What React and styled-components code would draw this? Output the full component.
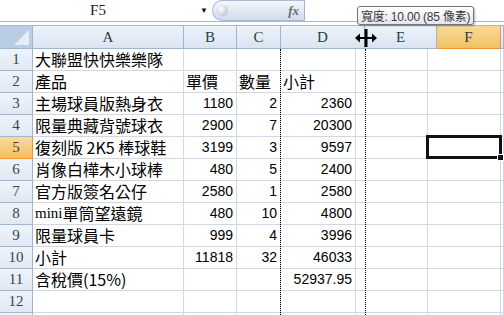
import React from 'react';
import styled, { createGlobalStyle } from 'styled-components';

const GlobalStyle = createGlobalStyle`
    html, body {
        margin: 0;
        padding: 0;
        background: #ffffff;
        overflow: hidden;
    }
    #root {
        width: 504px;
        height: 315px;
    }
`;

const Window = styled.div`
    position: relative;
    width: 504px;
    height: 315px;
    overflow: hidden;
    background: #ffffff;
    font-family: "Liberation Sans", "Noto Sans CJK TC", sans-serif;
`;

const FormulaBar = styled.div`
    display: flex;
    height: 22px;
    border-bottom: 1px solid #a5b9d3;
    box-sizing: border-box;
`;

const NameBox = styled.div`
    width: 196px;
    display: flex;
    align-items: center;
    justify-content: center;
    font-family: "Liberation Serif", serif;
    font-size: 15px;
    color: #222;
`;

const DropArrow = styled.div`
    width: 16px;
    display: flex;
    align-items: center;
    justify-content: center;
    font-size: 8px;
    color: #111;
`;

const Pill = styled.div`
    width: 93px;
    height: 21px;
    box-sizing: border-box;
    border: 1px solid #a9bcd4;
    border-right: 1px solid #9fb3cc;
    border-radius: 10px 0 0 10px;
    background: linear-gradient(#f4f8fc, #cfdbea);
    display: flex;
    align-items: center;
    justify-content: space-between;
    padding: 0 5px 0 4px;
`;

const Knob = styled.div`
    width: 11px;
    height: 11px;
    border-radius: 50%;
    background: radial-gradient(circle at 35% 35%, #ffffff, #aeb8c4);
`;

const Fx = styled.span`
    font-family: "Liberation Serif", serif;
    font-style: italic;
    font-weight: bold;
    font-size: 13px;
    color: #6a6a6a;
`;

const Spacer = styled.div`
    height: 4px;
    border-bottom: 1px solid #a5b9d3;
    box-sizing: border-box;
`;

const HeaderRow = styled.div`
    display: flex;
    height: 23px;
`;

const HeaderCell = styled.div`
    box-sizing: border-box;
    width: ${p => p.w}px;
    flex: ${p => (p.w ? 'none' : '1')};
    display: flex;
    align-items: center;
    justify-content: center;
    border-right: 1px solid ${p => (p.sel ? '#f29436' : '#9eb6ce')};
    border-bottom: 1px solid ${p => (p.sel ? '#f29436' : '#9eb6ce')};
    background: ${p => (p.sel
        ? 'linear-gradient(#f9d99f, #f1c15f)'
        : 'linear-gradient(#eef3fa, #dae4f1)')};
    font-family: "Liberation Serif", serif;
    font-size: 15px;
    color: #27413e;
`;

const Corner = styled.div`
    position: relative;
    width: 33px;
    height: 23px;
    box-sizing: border-box;
    border-right: 1px solid #9eb6ce;
    border-bottom: 1px solid #9eb6ce;
    background: #b9cde5;
`;

const CornerTri = styled.div`
    position: absolute;
    right: 3px;
    bottom: 3px;
    width: 0;
    height: 0;
    border-left: 15px solid transparent;
    border-bottom: 15px solid #e6edf6;
`;

const Row = styled.div`
    display: flex;
    height: 22px;
`;

const RowHead = styled.div`
    width: 33px;
    flex: none;
    box-sizing: border-box;
    display: flex;
    align-items: center;
    justify-content: center;
    border-right: 1px solid ${p => (p.sel ? '#f29436' : '#9eb6ce')};
    border-bottom: 1px solid ${p => (p.sel ? '#f29436' : '#9eb6ce')};
    background: ${p => (p.sel
        ? 'linear-gradient(#f9d99f, #f1c15f)'
        : 'linear-gradient(#eef3fa, #e1e9f4)')};
    font-family: "Liberation Serif", serif;
    font-size: 15px;
    color: #34494a;
`;

const Cell = styled.div`
    box-sizing: border-box;
    width: ${p => p.w}px;
    flex: ${p => (p.w ? 'none' : '1')};
    display: flex;
    align-items: flex-end;
    justify-content: ${p => (p.num ? 'flex-end' : 'flex-start')};
    padding: 0 ${p => (p.num ? '3px' : '0')} 1px ${p => (p.num ? '0' : '2px')};
    border-right: 1px solid #d0d7e5;
    border-bottom: 1px solid #d0d7e5;
    white-space: nowrap;
    font-size: ${p => (p.num ? '14px' : '16px')};
    line-height: 19px;
    font-family: ${p => (p.num
        ? '"Liberation Sans", sans-serif'
        : '"Noto Sans CJK TC", "Liberation Sans", sans-serif')};
    color: #000;
`;

const Serif = styled.span`
    font-family: "Liberation Serif", serif;
    font-size: 15px;
`;

const DottedLine = styled.div`
    position: absolute;
    top: ${p => p.top}px;
    bottom: 0;
    left: ${p => p.x}px;
    width: 0;
    border-left: 1px dotted #000;
`;

const Selection = styled.div`
    position: absolute;
    left: 426px;
    top: 135px;
    width: 76px;
    height: 24px;
    box-sizing: border-box;
    border: 3px solid #111;
`;

const Handle = styled.div`
    position: absolute;
    right: -5px;
    bottom: -5px;
    width: 5px;
    height: 5px;
    background: #111;
    border: 1px solid #fff;
`;

const Tooltip = styled.div`
    position: absolute;
    left: 357px;
    top: 6px;
    height: 19px;
    box-sizing: border-box;
    padding: 0 3px;
    display: flex;
    align-items: center;
    border: 1px solid #767676;
    border-radius: 3px;
    background: linear-gradient(#ffffff, #e4e5f0);
    box-shadow: 1px 1px 2px rgba(0, 0, 0, 0.3);
    font-family: "Liberation Sans", "Noto Sans CJK TC", sans-serif;
    font-size: 12px;
    letter-spacing: -0.2px;
    color: #3b3b3b;
    white-space: nowrap;
`;

const Cursor = styled.svg`
    position: absolute;
    left: 355px;
    top: 28px;
`;

const gridCols = [151, 53, 44, 75, 72, 73, 0];
const headCols = [
    ['A', 151], ['B', 53], ['C', 44], ['D', 84], ['E', 72], ['F', 64], ['', 0]
];

const rows = [
    ['大聯盟快快樂樂隊'],
    ['產品', '單價', '數量', '小計'],
    ['主場球員版熱身衣', 1180, 2, 2360],
    ['限量典藏背號球衣', 2900, 7, 20300],
    ['復刻版 2K5 棒球鞋', 3199, 3, 9597],
    ['肖像白樺木小球棒', 480, 5, 2400],
    ['官方版簽名公仔', 2580, 1, 2580],
    [<><Serif>mini</Serif>單筒望遠鏡</>, 480, 10, 4800],
    ['限量球員卡', 999, 4, 3996],
    ['小計', 11818, 32, 46033],
    ['含稅價(15%)', '', '', '52937.95'],
    [],
    []
];

export default function App() {
    return (
        <Window>
            <GlobalStyle />
            <FormulaBar>
                <NameBox>F5</NameBox>
                <DropArrow>▼</DropArrow>
                <Pill>
                    <Knob />
                    <Fx>fx</Fx>
                </Pill>
            </FormulaBar>
            <Spacer />
            <HeaderRow>
                <Corner><CornerTri /></Corner>
                {headCols.map(([label, w], i) => (
                    <HeaderCell key={i} w={w} sel={label === 'F'}>{label}</HeaderCell>
                ))}
            </HeaderRow>
            {rows.map((r, ri) => (
                <Row key={ri}>
                    <RowHead sel={ri === 4}>{ri < 12 ? ri + 1 : ''}</RowHead>
                    {gridCols.map((w, ci) => {
                        const v = r[ci];
                        const num = typeof v === 'number' || (ci === 3 && ri === 10);
                        return (
                            <Cell key={ci} w={w} num={num}>{v}</Cell>
                        );
                    })}
                </Row>
            ))}
            <DottedLine x={280} top={49} />
            <DottedLine x={365} top={49} />
            <Selection><Handle /></Selection>
            <Tooltip>寬度: 10.00 (85 像素)</Tooltip>
            <Cursor width="22" height="20" viewBox="0 0 22 20">
                <rect x="9.5" y="1" width="3" height="18" fill="#000" />
                <rect x="3" y="9" width="16" height="2" fill="#000" />
                <path d="M0 10 L5 5.5 L5 14.5 Z" fill="#000" />
                <path d="M22 10 L17 5.5 L17 14.5 Z" fill="#000" />
            </Cursor>
        </Window>
    );
}
